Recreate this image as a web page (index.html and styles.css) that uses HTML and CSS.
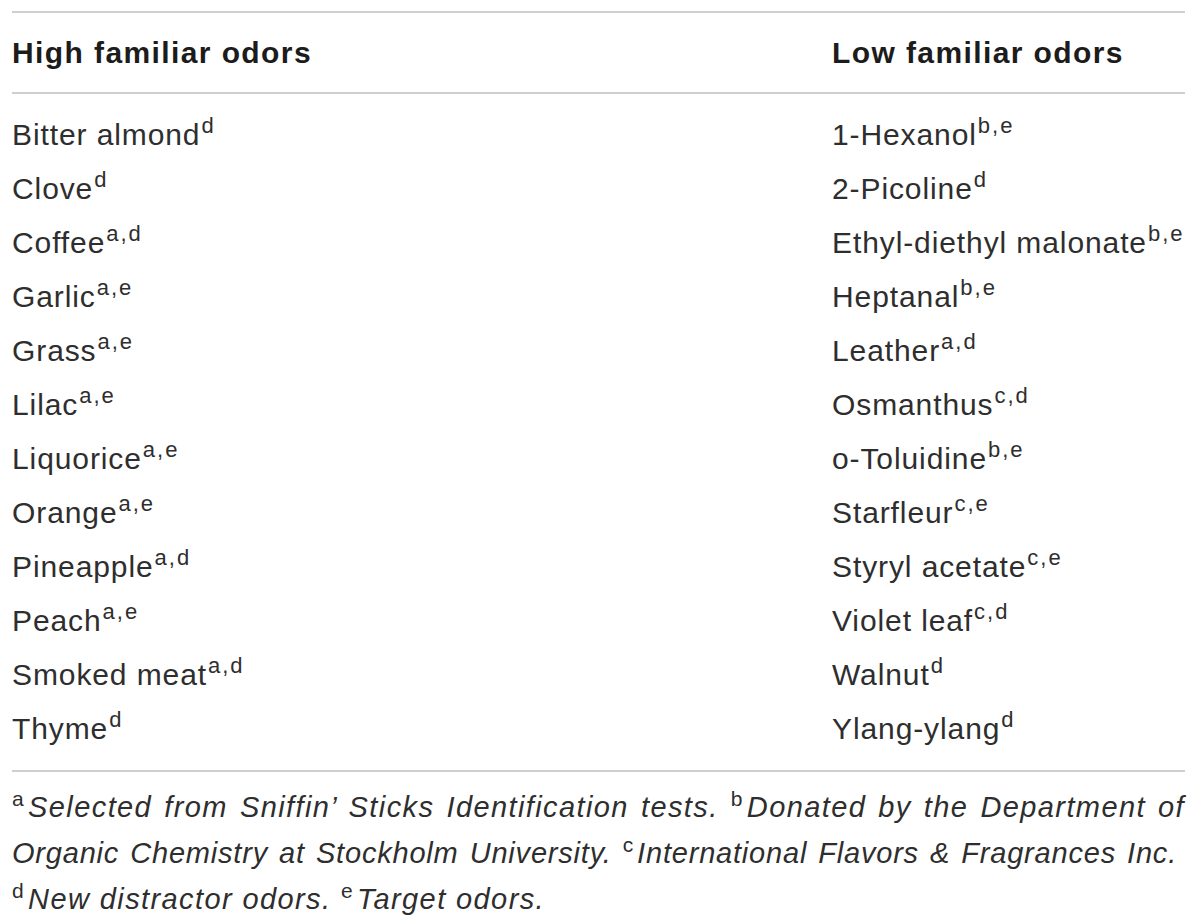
FILE: index.html
```html
<!DOCTYPE html>
<html>
<head>
<meta charset="utf-8">
<link rel="stylesheet" href="styles.css">
</head>
<body>
<div class="table">
  <div class="head">
    <div class="th">High familiar odors</div>
    <div class="th">Low familiar odors</div>
  </div>
  <div class="body">
    <div class="td">Bitter almond<sup>d</sup></div><div class="td">1-Hexanol<sup>b,e</sup></div>
    <div class="td">Clove<sup>d</sup></div><div class="td">2-Picoline<sup>d</sup></div>
    <div class="td">Coffee<sup>a,d</sup></div><div class="td">Ethyl-diethyl malonate<sup>b,e</sup></div>
    <div class="td">Garlic<sup>a,e</sup></div><div class="td">Heptanal<sup>b,e</sup></div>
    <div class="td">Grass<sup>a,e</sup></div><div class="td">Leather<sup>a,d</sup></div>
    <div class="td">Lilac<sup>a,e</sup></div><div class="td">Osmanthus<sup>c,d</sup></div>
    <div class="td">Liquorice<sup>a,e</sup></div><div class="td">o-Toluidine<sup>b,e</sup></div>
    <div class="td">Orange<sup>a,e</sup></div><div class="td">Starfleur<sup>c,e</sup></div>
    <div class="td">Pineapple<sup>a,d</sup></div><div class="td">Styryl acetate<sup>c,e</sup></div>
    <div class="td">Peach<sup>a,e</sup></div><div class="td">Violet leaf<sup>c,d</sup></div>
    <div class="td">Smoked meat<sup>a,d</sup></div><div class="td">Walnut<sup>d</sup></div>
    <div class="td">Thyme<sup>d</sup></div><div class="td">Ylang-ylang<sup>d</sup></div>
  </div>
  <p class="foot"><span class="ln full"><sup>a</sup>Selected from Sniffin’ Sticks Identification tests. <sup>b</sup>Donated by the Department of</span><span class="ln full tight"><span class="nx">Organic Chemistry at Stockholm University. <sup>c</sup>International Flavors &amp; Fragrances Inc.</span></span><span class="ln"><sup>d</sup>New distractor odors. <sup>e</sup>Target odors.</span></p>
</div>
</body>
</html>
```

FILE: styles.css
```css
html, body {
  margin: 0;
  padding: 0;
  background: #ffffff;
}
body {
  font-family: "Liberation Sans", Arial, sans-serif;
  color: #2e2e2e;
}
.table {
  margin: 11px 15px 0 12px;
}
.head {
  display: grid;
  grid-template-columns: 820px 1fr;
  border-top: 2px solid #cfcfcf;
  border-bottom: 2px solid #cfcfcf;
}
.th {
  font-weight: bold;
  font-size: 30px;
  line-height: 79px;
  letter-spacing: 1.4px;
  color: #1c1c1c;
}
.body {
  display: grid;
  grid-template-columns: 820px 1fr;
  padding: 14px 0;
  border-bottom: 2px solid #cfcfcf;
}
.td {
  font-size: 30px;
  line-height: 54px;
  letter-spacing: 0.9px;
  white-space: nowrap;
}
.td sup {
  font-size: 22px;
  line-height: 0;
  vertical-align: 12px;
  letter-spacing: 2px;
  margin-left: 1px;
}
.foot {
  margin: 0;
  padding-top: 12px;
  font-size: 29px;
  line-height: 46px;
  font-style: italic;
  letter-spacing: 1.4px;
  color: #2e2e2e;
}
.ln {
  display: block;
  white-space: nowrap;
}
.ln.full {
  text-align: justify;
  text-align-last: justify;
}
.ln.tight {
  letter-spacing: 0.8px;
  padding-right: 8px;
}
.foot sup {
  font-style: normal;
  font-size: 21px;
  line-height: 0;
  vertical-align: 11px;
  margin-right: 3px;
}
```
